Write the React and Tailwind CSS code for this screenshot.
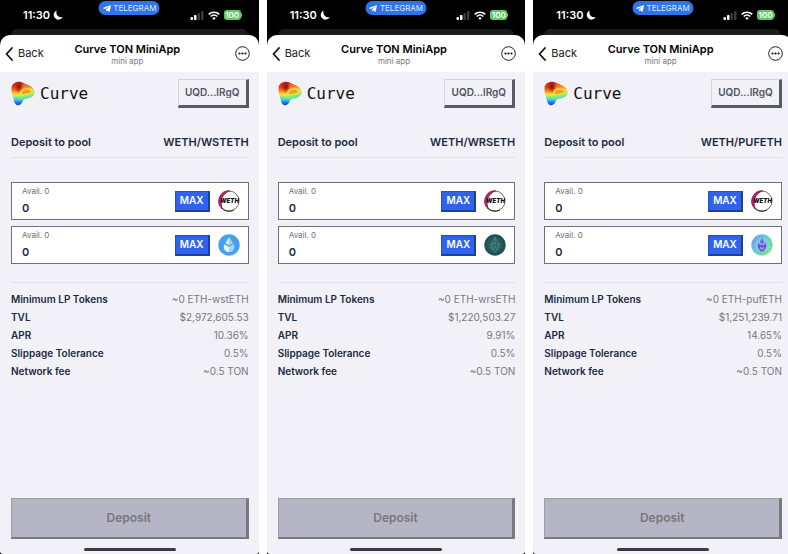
import { useId, useState } from "react";
import { FaTelegramPlane } from "react-icons/fa";

const pools = [
  {
    pair: "WETH/WSTETH",
    lp: "~0 ETH-wstETH",
    tvl: "$2,972,605.53",
    apr: "10.36%",
    token: "wsteth",
  },
  {
    pair: "WETH/WRSETH",
    lp: "~0 ETH-wrsETH",
    tvl: "$1,220,503.27",
    apr: "9.91%",
    token: "wrseth",
  },
  {
    pair: "WETH/PUFETH",
    lp: "~0 ETH-pufETH",
    tvl: "$1,251,239.71",
    apr: "14.65%",
    token: "pufeth",
  },
];

const CurveLogo = () => {
  const id = useId();
  const shape =
    "M.5 7C1 3 4 .8 8 .8C11 .8 13 2.600 16 3.800C20 5.200 23.500 8 23.300 11.500C23.200 15 20.500 16.500 16.500 17.200C13.500 17.700 12.500 18.500 11.500 20.500C10.500 23 9 24.300 7 24.300C4.500 24.200 3.300 21.500 2.600 18.500C2 15.500 .2 11.500 .5 7Z";
  return (
    <svg viewBox="0 0 24 25" className="h-[25px] w-6" aria-hidden="true">
      <defs>
        <linearGradient id={id + "leg"} x1="0" y1="0" x2="0" y2="1">
          <stop offset="0" stopColor="#c02012" />
          <stop offset="0.22" stopColor="#e33a18" />
          <stop offset="0.42" stopColor="#f9941f" />
          <stop offset="0.55" stopColor="#f2e63c" />
          <stop offset="0.66" stopColor="#7fe88a" />
          <stop offset="0.77" stopColor="#35cfe6" />
          <stop offset="0.88" stopColor="#2a6ff0" />
          <stop offset="1" stopColor="#2338c4" />
        </linearGradient>
        <linearGradient id={id + "lobe"} x1="0" y1="0" x2="0.2" y2="1">
          <stop offset="0" stopColor="#e33a18" />
          <stop offset="0.3" stopColor="#f9861f" />
          <stop offset="0.55" stopColor="#f5e23a" />
          <stop offset="0.8" stopColor="#8eec72" />
          <stop offset="1" stopColor="#48dcc4" />
        </linearGradient>
        <radialGradient id={id + "dark"} cx="0.5" cy="0.5" r="0.5">
          <stop offset="0" stopColor="#7a0f0c" />
          <stop offset="1" stopColor="#a01810" stopOpacity="0" />
        </radialGradient>
        <clipPath id={id + "clip"}>
          <path d={shape} />
        </clipPath>
      </defs>
      <path d={shape} fill={`url(#${id}leg)`} />
      <g clipPath={`url(#${id}clip)`}>
        <path d="M11 2C18 3 24 7 24 12C23 17 17 18 10 19C8 14 9 6 11 2Z" fill={`url(#${id}lobe)`} />
        <ellipse cx="8" cy="6" rx="5" ry="6" fill={`url(#${id}dark)`} />
        <path d="M11 10.500C14 8.200 18 8.300 20.500 10.500C18 12.500 14 13 10.500 13Z" fill="#f79a2a" />
        <path
          d="M9.500 13.500C10 9.500 12 7.800 15 7.800C18 7.800 20.500 9 21.500 11"
          fill="none"
          stroke="#f8dc3a"
          strokeWidth="1.300"
        />
        <path
          d="M9.500 14C14 13.800 18.500 13.200 21.500 11.500"
          fill="none"
          stroke="#d3f04a"
          strokeWidth="1.300"
        />
      </g>
    </svg>
  );
};

const WethIcon = () => (
  <svg viewBox="0 0 22 22" className="size-[22px]" aria-hidden="true">
    <circle cx="11" cy="11" r="10" fill="#fff" stroke="#6a6a6f" />
    <path
      d="M11.500 .8A10.300 10.300 0 0 0 4.500 19A13 13 0 0 1 11.500 .8Z"
      fill="#b8246a"
      stroke="#9a2159"
      strokeWidth="1"
    />
    <path d="M16 20A10.200 10.200 0 0 1 3 17.500" fill="none" stroke="#3a2730" strokeWidth="1" />
    <text
      x="11.500"
      y="13"
      textAnchor="middle"
      fontFamily="Inter, sans-serif"
      fontSize="6"
      fontWeight="900"
      fontStyle="italic"
      fill="#111"
    >
      WETH
    </text>
  </svg>
);

const LidoIcon = () => (
  <svg viewBox="0 0 22 22" className="size-[22px]" aria-hidden="true">
    <circle cx="11" cy="11" r="10.700" fill="#45a0f2" />
    <path d="M11 3.300L14.700 9L11 11.200L7.300 9Z" fill="#d9eefd" />
    <path d="M11 3.300L14.700 9L11 11.200Z" fill="#9fd0f9" />
    <path
      d="M6.500 10.300L11 13L15.500 10.300C17.200 13.300 15.700 18 11 18C6.300 18 4.800 13.300 6.500 10.300Z"
      fill="#e8f5fe"
    />
    <path d="M11 13L15.500 10.300C17.200 13.300 15.700 18 11 18Z" fill="#a5d3f9" />
  </svg>
);

const KelpIcon = () => (
  <svg viewBox="0 0 22 22" className="size-[22px]" aria-hidden="true">
    <circle cx="11" cy="11" r="10.700" fill="#1f5152" />
    <circle cx="11" cy="11" r="8" fill="#265d5c" />
    <g fill="none" stroke="#4c8f87" strokeWidth="0.8">
      <path d="M11 3.500L15.500 11L11 13.500L6.500 11Z" />
      <path d="M6.500 13L11 18.500L15.500 13L11 15.500Z" />
      <path d="M11 3.500V13.500M6.500 11L11 9L15.500 11" />
    </g>
  </svg>
);

const PufferIcon = () => {
  const id = useId();
  return (
    <svg viewBox="0 0 22 22" className="size-[22px]" aria-hidden="true">
      <defs>
        <linearGradient id={id} x1="0" y1="0.1" x2="1" y2="0.8">
          <stop offset="0" stopColor="#8a8df0" />
          <stop offset="0.35" stopColor="#62c5ea" />
          <stop offset="0.7" stopColor="#6fe3a5" />
          <stop offset="1" stopColor="#93ea7c" />
        </linearGradient>
      </defs>
      <circle cx="11" cy="11" r="10.700" fill={`url(#${id})`} />
      <circle
        cx="11"
        cy="11"
        r="8.800"
        fill="none"
        stroke="#7f8be8"
        strokeWidth="1.200"
        strokeDasharray="1 2.500"
      />
      <circle cx="11" cy="11" r="6.500" fill="#86c8ee" />
      <path d="M11 4L13.500 8.500L11 10L8.500 8.500Z" fill="#7a62d6" />
      <path
        d="M7 8.500L8.500 10.500L11 11L13.500 10.500L15 8.500L15.300 13L12.500 17.500H9.500L6.700 13Z"
        fill="#6a55c6"
      />
      <path d="M9 12.500L11 14L13 12.500L12.500 15.500H9.500Z" fill="#a99cf2" />
    </svg>
  );
};

const tokenIcons = {
  weth: WethIcon,
  wsteth: LidoIcon,
  wrseth: KelpIcon,
  pufeth: PufferIcon,
};

const StatusBar = () => (
  <div className="relative h-[35px] shrink-0 bg-black text-white">
    <div className="absolute inset-x-[11px] bottom-0 h-[6px] rounded-t-lg bg-[#1c1a1b]" />
    <div className="flex items-center justify-between pl-[23px] pr-[17px] pt-[6px]">
      <div className="flex items-center gap-[3px] text-[11px] font-semibold leading-[18px]">
        11:30
        <svg viewBox="0 0 24 24" className="size-[10px]" fill="currentColor" aria-hidden="true">
          <path d="M9 1A11.500 11.500 0 1 0 23.500 17A12 12 0 0 1 9 1Z" />
        </svg>
      </div>
      <div className="flex items-center gap-[4px]">
        <svg viewBox="0 0 14 9" className="h-[9px] w-[14px]" aria-hidden="true">
          <rect x="0.500" y="6" width="2.500" height="3" rx="0.700" fill="#fff" />
          <rect x="4" y="4" width="2.500" height="5" rx="0.700" fill="#fff" />
          <rect x="7.500" y="2" width="2.500" height="7" rx="0.700" fill="#3a3a3c" />
          <rect x="11" y="0" width="2.500" height="9" rx="0.700" fill="#3a3a3c" />
        </svg>
        <svg viewBox="0 0 12 9" className="h-[9px] w-3" aria-hidden="true">
          <g fill="none" stroke="#fff" strokeWidth="1.700">
            <path d="M.7 3.400A7.600 7.600 0 0 1 11.300 3.400" />
            <path d="M2.700 5.500A4.800 4.800 0 0 1 9.300 5.500" />
          </g>
          <path d="M4.200 7A2.600 2.600 0 0 1 7.800 7L6 9Z" fill="#fff" />
        </svg>
        <div className="flex items-center">
          <span className="h-[10px] w-[17px] rounded-[3px] bg-[#63c766] text-center text-[8px] font-semibold leading-[10px]">
            100
          </span>
          <span className="h-1 w-px rounded-r bg-[#63c766]" />
        </div>
      </div>
    </div>
    <a
      href="#telegram"
      className="absolute left-1/2 top-px flex h-[14px] w-[61px] -translate-x-1/2 items-center justify-center gap-[2px] rounded-full bg-[#2f74ea] text-[8px] leading-[14px] text-[#dfeaff]"
    >
      <FaTelegramPlane className="size-[9px] shrink-0 text-white" />
      TELEGRAM
    </a>
  </div>
);

const AppHeader = () => (
  <header className="grid h-[37px] shrink-0 grid-cols-[1fr_auto_1fr] items-center rounded-t-[10px] bg-white pl-[5px] pr-[9px] text-black">
    <button type="button" className="flex items-center gap-[5px] text-[11px] text-[#222]">
      <svg viewBox="0 0 8 14" className="h-[14px] w-2" fill="none" aria-hidden="true">
        <path d="M7 1L1.500 7L7 13" stroke="#111" strokeWidth="1.800" strokeLinecap="round" strokeLinejoin="round" />
      </svg>
      Back
    </button>
    <div className="text-center">
      <h1 className="text-[11px] font-semibold leading-[14px]">Curve TON MiniApp</h1>
      <p className="text-[8px] leading-[10px] text-[#77777c]">mini app</p>
    </div>
    <button type="button" aria-label="More" className="justify-self-end">
      <svg viewBox="0 0 15 15" className="size-[15px]" aria-hidden="true">
        <circle cx="7.500" cy="7.500" r="6.800" fill="none" stroke="#222" />
        <circle cx="4.500" cy="7.500" r="1.100" fill="#111" />
        <circle cx="7.500" cy="7.500" r="1.100" fill="#111" />
        <circle cx="10.500" cy="7.500" r="1.100" fill="#111" />
      </svg>
    </button>
  </header>
);

const TokenInput = ({ token }) => {
  const [amount, setAmount] = useState("0");
  const id = useId();
  const Icon = tokenIcons[token];

  return (
    <div className="flex h-[38px] items-center border border-[#6f7077] bg-white pl-[10px] pr-2">
      <div className="min-w-0 flex-1">
        <label htmlFor={id} className="block text-[8px] leading-[14px] text-[#6d6f76]">
          Avail. 0
        </label>
        <input
          id={id}
          type="text"
          inputMode="decimal"
          value={amount}
          onChange={(e) => setAmount(e.target.value)}
          className="block h-[20px] w-full bg-transparent text-[11px] font-semibold text-[#1b2a41] outline-none"
        />
      </div>
      <button
        type="button"
        onClick={() => setAmount("0")}
        className="mr-2 h-[21px] w-[35px] border border-b-2 border-r-2 border-[#2450c4] border-b-[#1f3f94] border-r-[#1f3f94] bg-[#2f63ee] text-[10px] font-semibold text-white"
      >
        MAX
      </button>
      <Icon />
    </div>
  );
};

const InfoRow = ({ label, value }) => (
  <div className="flex justify-between text-[10px] leading-[18px]">
    <dt className="font-semibold text-[#1b2a41]">{label}</dt>
    <dd className="text-[#77787e]">{value}</dd>
  </div>
);

const Phone = ({ pool }) => (
  <section className="flex min-h-screen flex-col bg-black">
    <StatusBar />
    <AppHeader />
    <main className="flex flex-1 flex-col rounded-b-[3px] bg-[#f2f1f8] pb-[3px] pl-[11px] pr-[10px] pt-[7px]">
      <div className="flex items-center justify-between">
        <div className="flex items-center gap-[5px]">
          <CurveLogo />
          <span className="font-['DejaVu_Sans_Mono',monospace] text-[16px] leading-[24px] text-[#111]">
            Curve
          </span>
        </div>
        <button
          type="button"
          className="h-[29px] w-[71px] border border-b-3 border-r-3 border-[#d5d5dc] border-b-[#565c66] border-r-[#565c66] text-[10px] font-semibold text-[#50555f]"
        >
          UQD...lRgQ
        </button>
      </div>

      <h2 className="mt-[25px] flex justify-between border-b border-[#e0e0e7] pb-[6px] text-[11px] font-semibold leading-[18px] text-[#1b2a41]">
        <span>Deposit to pool</span>
        <span>{pool.pair}</span>
      </h2>

      <div className="mt-6 flex flex-col gap-[6px]">
        <TokenInput token="weth" />
        <TokenInput token={pool.token} />
      </div>

      <dl className="mt-[18px] border-t border-[#e0e0e7] pt-[7px]">
        <InfoRow label="Minimum LP Tokens" value={pool.lp} />
        <InfoRow label="TVL" value={pool.tvl} />
        <InfoRow label="APR" value={pool.apr} />
        <InfoRow label="Slippage Tolerance" value="0.5%" />
        <InfoRow label="Network fee" value="~0.5 TON" />
      </dl>

      <div className="mt-auto pt-6">
        <button
          type="button"
          disabled
          className="h-[41px] w-full border border-b-2 border-r-3 border-[#9d9da5] border-b-[#77797f] border-r-[#77797f] bg-[#b6b5c5] text-[12px] font-semibold text-[#76777d]"
        >
          Deposit
        </button>
        <div className="mx-auto mt-[9px] h-[3px] w-[92px] rounded-full bg-[#3c3c40]" />
      </div>
    </main>
  </section>
);

export default function App() {
  return (
    <div className="overflow-hidden bg-white font-['Inter',sans-serif]">
      <div className="-mr-1 grid grid-cols-3 gap-2">
        {pools.map((pool) => (
          <Phone key={pool.pair} pool={pool} />
        ))}
      </div>
    </div>
  );
}
